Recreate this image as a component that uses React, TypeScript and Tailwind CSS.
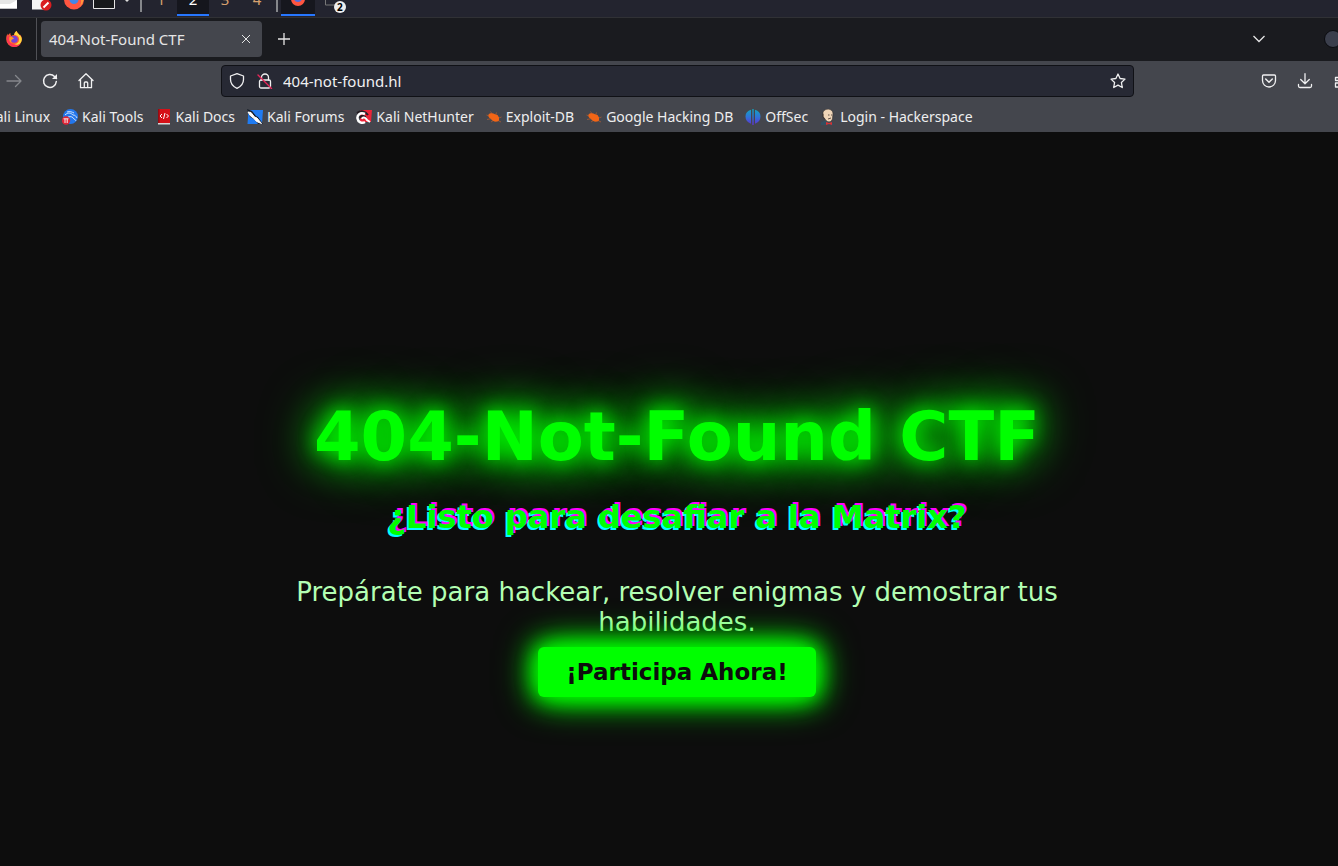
import React from "react";

type IconProps = { className?: string };

function Firefox({ className }: IconProps) {
  return (
    <svg viewBox="0 0 16 16" className={className} aria-hidden="true">
      <path d="M15.300 5.600c-.3-.9-1-1.700-1.600-2 .3.600.5 1.100.6 1.700C13.300 2.900 11 2.200 10.800 0 9 1 8.300 2.600 8.200 3.900 7 3.900 6 4.300 5.200 4.900 4.400 4 4.300 2.700 4.400 2.100c-1.100.6-1.900 1.400-2.500 2.300C1.600 3.900 1.600 3.200 1.700 2.500.6 4 .2 6 .2 8.200a7.800 7.800 0 0 0 15.600 0c0-.9-.2-1.800-.5-2.600Z" fill="#ff5a36" />
      <path d="M10.800 0C9 1 8.300 2.600 8.200 3.900c3.500 0 5 2.200 4.900 4.600-.1 2.800-2.200 4.600-4.700 4.600 3.900 2 7.400-.8 7.400-5.100C15.700 4 11 3 10.800 0Z" fill="#ffd83b" />
      <path d="M1.800 4.500C-.6 9.200 2.200 15 7.600 15.900c3 .4 5.800-.9 7.200-3.300-3 2.200-7 2-9.100-.7C3.600 9 5 6.500 1.800 4.500Z" fill="#ff3454" />
      <circle cx="8.200" cy="8.200" r="3.500" fill="#7542d7" />
      <path d="M3.500 6.100c1.600-.3 3.300.1 4.500 1.300-1 .8-2.300.8-2.700 2-.5 1.200.3 2.500 1.500 3.300-3-.6-4.200-3.500-3.300-6.600Z" fill="#ff9a24" />
    </svg>
  );
}

function Workspaces() {
  return (
    <nav aria-label="Workspaces" className="flex h-4 items-end pl-[145px] text-[15px] leading-4 text-[#d6a06d]">
      {["1", "2", "3", "4"].map((n) => (
        <button
          key={n}
          className={
            n === "2"
              ? "flex h-9 w-8 items-center justify-center border-b-2 border-[#2777ff] bg-[#15161d] pt-1 text-white"
              : "flex h-9 w-8 items-center justify-center border-b-2 border-transparent pt-1"
          }
        >
          {n}
        </button>
      ))}
    </nav>
  );
}

function SystemPanel() {
  return (
    <header className="relative h-[17px] overflow-hidden bg-[#23242f] font-['Noto_Sans',sans-serif]">
      <Workspaces />
      <svg className="absolute left-0 top-0 h-4 w-[360px]" viewBox="0 0 360 16" aria-hidden="true">
        <path d="M0 0h17v8.500H0z" fill="#e6e6e6" />
        <path d="M0 4h10l7-4v8.500H0z" fill="#fff" />
        <path d="M32 0h14v9.500H32z" fill="#f4f4f4" />
        <circle cx="46" cy="5" r="5.500" fill="#d91d20" />
        <path d="m43.500 7.500 5-5" stroke="#fff" strokeWidth="2" />
        <circle cx="74" cy="-.5" r="10" fill="#ff5540" />
        <path d="M78-10c8 3 7 13 1 17 3-3 3-9-1-12Z" fill="#ff9b3a" />
        <circle cx="74" cy="-.5" r="4.500" fill="#4386e8" />
        <path d="M93.500-5h21V8.500h-21z" fill="#17191b" stroke="#e6e6e6" />
        <path d="m125 0 2 2 2-2z" fill="#ddd" />
        <path d="M141 0v12M277 0v12" stroke="#85878b" strokeWidth="2" />
        <path d="M281 0h34v14h-34z" fill="#16171e" />
        <path d="M281 14h34v2h-34z" fill="#2777ff" />
        <circle cx="298" cy="-1" r="7" fill="#ff5540" />
        <circle cx="298" cy="-2" r="4" fill="#4e6ee0" />
        <path d="M325.500-4v9h10" fill="none" stroke="#777" />
        <circle cx="340" cy="7" r="6" fill="#eee" />
      </svg>
      <span className="absolute left-[337px] top-0 text-[10px] font-bold leading-[14px] text-black">2</span>
    </header>
  );
}

function TabStrip() {
  return (
    <div className="flex h-11 items-center border-t border-[#303135] bg-[#1a1b1f] pb-px text-[#e5e5e5]">
      <div className="flex h-full w-[37px] shrink-0 items-center border-r border-[#505156] pl-1.5">
        <Firefox className="size-4" />
      </div>
      <div className="ml-1 flex h-9 w-[221px] shrink-0 items-center justify-between rounded bg-[#44464d] pl-2 pr-2.5">
        <span className="text-[15px]">404-Not-Found CTF</span>
        <button aria-label="Close tab">
          <svg viewBox="0 0 12 12" className="size-3" aria-hidden="true"><path d="m2 2 8 8m0-8-8 8" stroke="currentColor" /></svg>
        </button>
      </div>
      <button aria-label="New tab" className="ml-[15px]">
        <svg viewBox="0 0 14 14" className="size-3.5" aria-hidden="true"><path d="M7 1v12M1 7h12" stroke="currentColor" strokeWidth="1.300" /></svg>
      </button>
      <button aria-label="List all tabs" className="ml-auto">
        <svg viewBox="0 0 14 14" className="size-3.5" fill="none" aria-hidden="true"><path d="m1.500 4 5.500 5.500L12.500 4" stroke="currentColor" strokeWidth="1.300" /></svg>
      </button>
      <div className="ml-[58px] w-[14px] overflow-hidden">
        <button aria-label="Minimize" className="block size-[18px] rounded-full border border-[#0b0c10] bg-[#3b3f4c]" />
      </div>
    </div>
  );
}

const lineIcon = { fill: "none", stroke: "currentColor", strokeWidth: 1.3, strokeLinecap: "round", strokeLinejoin: "round" } as const;

function Toolbar() {
  return (
    <div className="flex h-10 items-center overflow-hidden text-[#f0f0f1]">
      <button aria-label="Forward" className="ml-1.5 shrink-0 text-[#85878c]">
        <svg viewBox="0 0 16 16" className="size-4" {...lineIcon}><path d="M1 8h14M9.500 2.500 15 8l-5.500 5.500" /></svg>
      </button>
      <button aria-label="Reload" className="ml-5 shrink-0">
        <svg viewBox="0 0 16 16" className="size-4" {...lineIcon} strokeWidth={1.5}><path d="M14.300 8.500A6.400 6.400 0 1 1 12.500 3.500L14.500 5.500" /><path d="M15 1v5h-5z" fill="currentColor" stroke="none" /></svg>
      </button>
      <button aria-label="Home" className="ml-5 shrink-0">
        <svg viewBox="0 0 16 16" className="size-4" {...lineIcon}><path d="m1 7.500 7-6.800 7 6.800M2.500 6.500v8.200h11V6.500M6.300 14.500V10c0-.6.4-1 1-1h1.400c.6 0 1 .4 1 1v4.500" /></svg>
      </button>
      <div className="ml-[127px] flex h-8 flex-1 items-center rounded border border-[#101116] bg-[#272934] px-[7px]">
        <svg viewBox="0 0 16 16" className="size-4 shrink-0" {...lineIcon}><path d="M8 .7 14.500 3v3.500c0 4-2.500 7-6.500 8.800-4-1.800-6.500-4.800-6.500-8.800V3Z" /></svg>
        <svg viewBox="0 0 16 16" className="ml-3 size-4 shrink-0" {...lineIcon}><rect x="2.500" y="7" width="11" height="8" rx="1.500" /><path d="M4.500 7V4.500a3.500 3.500 0 0 1 7 0V7" /><path d="m1 2 13.500 13.500" stroke="#e72659" strokeWidth="1.400" /></svg>
        <input aria-label="Address" defaultValue="404-not-found.hl" className="ml-2.5 min-w-0 flex-1 bg-transparent text-[15px] outline-none" />
        <button aria-label="Bookmark this page">
          <svg viewBox="0 0 16 16" className="size-4" {...lineIcon}><path d="m8 1 2.100 4.500 4.900.6-3.600 3.400.9 5L8 12.100l-4.300 2.400.9-5L1 6.100l4.900-.6Z" /></svg>
        </button>
      </div>
      <button aria-label="Save to Pocket" className="ml-[127px] shrink-0">
        <svg viewBox="0 0 16 16" className="size-4" {...lineIcon}><path d="M2.500 2h11c.6 0 1 .4 1 1v4.500a6.500 6.500 0 0 1-13 0V3c0-.6.4-1 1-1Z" /><path d="m4.700 6 3.300 3.200L11.300 6" strokeWidth="1.500" /></svg>
      </button>
      <button aria-label="Downloads" className="ml-5 shrink-0">
        <svg viewBox="0 0 16 16" className="size-4" {...lineIcon}><path d="M8 .7v9.500M3.700 6.500 8 10.700l4.300-4.200M1.500 11.500V13c0 .9.500 1.500 1.500 1.500h10c1 0 1.500-.6 1.500-1.500v-1.500" /></svg>
      </button>
      <button aria-label="Extensions" className="ml-5 w-[5px] shrink-0 overflow-hidden">
        <svg viewBox="0 0 16 16" className="size-4" {...lineIcon}><path d="M2.500 4.500H14v3H2.500zM2.500 10H14v4H2.500z" /></svg>
      </button>
    </div>
  );
}

function Bug() {
  return (
    <svg viewBox="0 0 16 16" className="size-4" aria-hidden="true">
      <path d="m.5 6 5 2M4.500 2.500l2 3M10.500 3.500l-1 3M1 10.500l5-1M15.500 8l-4 1.500M5 13l3-2M15 13l-4-2" stroke="#a85b35" strokeWidth=".8" />
      <path d="M2.500 5.500C4 3.500 7 4 9.500 5.500l2 .5 1.500 2.500v3l-1.500 1c-3 .5-5.500-.5-7-3-1.500-.5-2.500-2-2-4Z" fill="#f26516" />
    </svg>
  );
}

const drawings: Record<string, React.ReactNode> = {
  tools: (
    <svg viewBox="0 0 16 16" className="size-4" aria-hidden="true"><circle cx="8.500" cy="7.500" r="7.500" fill="#2377ed" /><path d="M3 6c3-3 6-2 8 0 2 0 3 1 4 3M6 8c3-1 5 0 6 2 1 1 2 1 2 2M5 3c3-1 5 0 7 1" fill="none" stroke="#e1f0ff" strokeWidth=".9" /><circle cx="4" cy="11.500" r="4.200" fill="#df2536" /><path d="M1.500 9.800h5M3 10v4M5.200 10v4" stroke="#fff" strokeWidth=".9" /></svg>
  ),
  docs: (
    <svg viewBox="0 0 16 16" className="size-4" aria-hidden="true"><path d="M2 0h12v15H2z" fill="#d51118" /><path d="M2 0h1.500v15H2z" fill="#970b12" /><path d="M2 14h12v1.500H2z" fill="#d8d8d8" /><path d="m6 5-2 2 2 2M10.500 5l2 2-2 2M9 4 7.500 10" fill="none" stroke="#fff" /></svg>
  ),
  forums: (
    <svg viewBox="0 0 16 16" className="size-4" aria-hidden="true"><path d="M1.500 1h14.500l-1 14H.5z" fill="#1f7bf2" /><path d="M0 0l5 2 4 5 2 1 5 7h-5l-4-5-4-2Z" fill="#151c28" /><path d="m1 3 3 .5 3.500 4.500 2.500 1 4.500 5.500-5-2-3-3.500-3-2Z" fill="#fff" stroke="#fff" /></svg>
  ),
  hunter: (
    <svg viewBox="0 0 16 16" className="size-4" aria-hidden="true"><path d="M4 1h12l-1 12H4z" fill="#ec2439" /><path d="M1 4c4-3 8-2 11 2M4 9c1-3 4-3 6 0" fill="none" stroke="#241d24" strokeWidth="2" /><path d="M9 5C4 3 1 6 1.500 9.500 2 13 6 15 9 13" fill="none" stroke="#fff" strokeWidth="2.500" /><path d="M6 10c1-3 4-1 5 1l3 2" fill="none" stroke="#fff" strokeWidth="2" /></svg>
  ),
  bug: <Bug />,
  offsec: (
    <svg viewBox="0 0 16 16" className="size-4" aria-hidden="true"><defs><linearGradient id="offsec-blue" x1="0" y1="0" x2="0" y2="1"><stop stopColor="#12a5bd" /><stop offset=".5" stopColor="#2f73d8" /><stop offset="1" stopColor="#6030d0" /></linearGradient></defs><path d="M6 .7v14C2.500 13.500.5 11 .5 7.500S2.500 1.500 6 .7ZM10 .7v14c3.500-1.200 5.500-3.700 5.500-7.200S13.500 1.500 10 .7ZM7.300 0h1.400v16H7.300z" fill="url(#offsec-blue)" /></svg>
  ),
  butler: (
    <svg viewBox="0 0 16 16" className="size-4" aria-hidden="true"><path d="M1 16v-2.500l4-2 7 1.500 2 3z" fill="#335061" /><path d="M3 3c2-4 9-4 10 1l-.5 6c-2 4.500-6 3-7.500 0L3 7.500Z" fill="#efd5b8" stroke="#312b2a" strokeWidth=".6" /><path d="M3 5v3l1.500 2M8 6h1.500m1.500 0h1M8 10l3-1" fill="none" stroke="#3d302c" strokeWidth=".8" /><path d="m6 13 3 1 3-1v3l-3-1-3 1Z" fill="#d73132" /></svg>
  ),
};

const bookmarks = [
  { name: "Kali Tools", icon: "tools" },
  { name: "Kali Docs", icon: "docs" },
  { name: "Kali Forums", icon: "forums" },
  { name: "Kali NetHunter", icon: "hunter" },
  { name: "Exploit-DB", icon: "bug" },
  { name: "Google Hacking DB", icon: "bug" },
  { name: "OffSec", icon: "offsec" },
  { name: "Login - Hackerspace", icon: "butler" },
];

function BookmarkBar() {
  return (
    <nav aria-label="Bookmarks" className="flex h-[31px] items-center gap-3 overflow-hidden whitespace-nowrap text-sm text-[#eeeeef]">
      <a href="#kali" className="-ml-[13px]">Kali Linux</a>
      {bookmarks.map((b) => (
        <a key={b.name} href={"#" + b.icon} className="flex items-center gap-1">
          {drawings[b.icon]}
          <span>{b.name}</span>
        </a>
      ))}
    </nav>
  );
}

export default function App() {
  return (
    <div className="flex min-h-screen flex-col bg-[#0d0d0d]">
      <SystemPanel />
      <div className="bg-[#44464d] font-['Noto_Sans',sans-serif]">
        <TabStrip />
        <Toolbar />
        <BookmarkBar />
      </div>
      <main className="flex flex-1 flex-col items-center justify-center pl-4 pt-24 text-center font-['DejaVu_Sans',sans-serif] text-[#00ff00]">
        <h1 className="text-[67px] font-bold leading-20 [text-shadow:0_0_20px_#00ff00,0_0_40px_#00ff00,0_0_60px_#00ff00]">404-Not-Found CTF</h1>
        <h2 className="mt-5 text-[32px] font-bold leading-10 [text-shadow:2px_-2px_#ff00ff,-2px_2px_#00ffff]">¿Listo para desafiar a la Matrix?</h2>
        <p className="mt-10 max-w-[800px] text-[26px] font-normal leading-[30px] text-[#b3ffb3]">Prepárate para hackear, resolver enigmas y demostrar tus habilidades.</p>
        <button className="mt-2.5 h-[50px] rounded-md bg-[#00ff00] px-7 text-[23px] font-bold text-[#0d0d0d] shadow-[0_0_20px_#00ff00,0_0_30px_#00ff00,0_0_40px_#00ff00]">¡Participa Ahora!</button>
      </main>
    </div>
  );
}
